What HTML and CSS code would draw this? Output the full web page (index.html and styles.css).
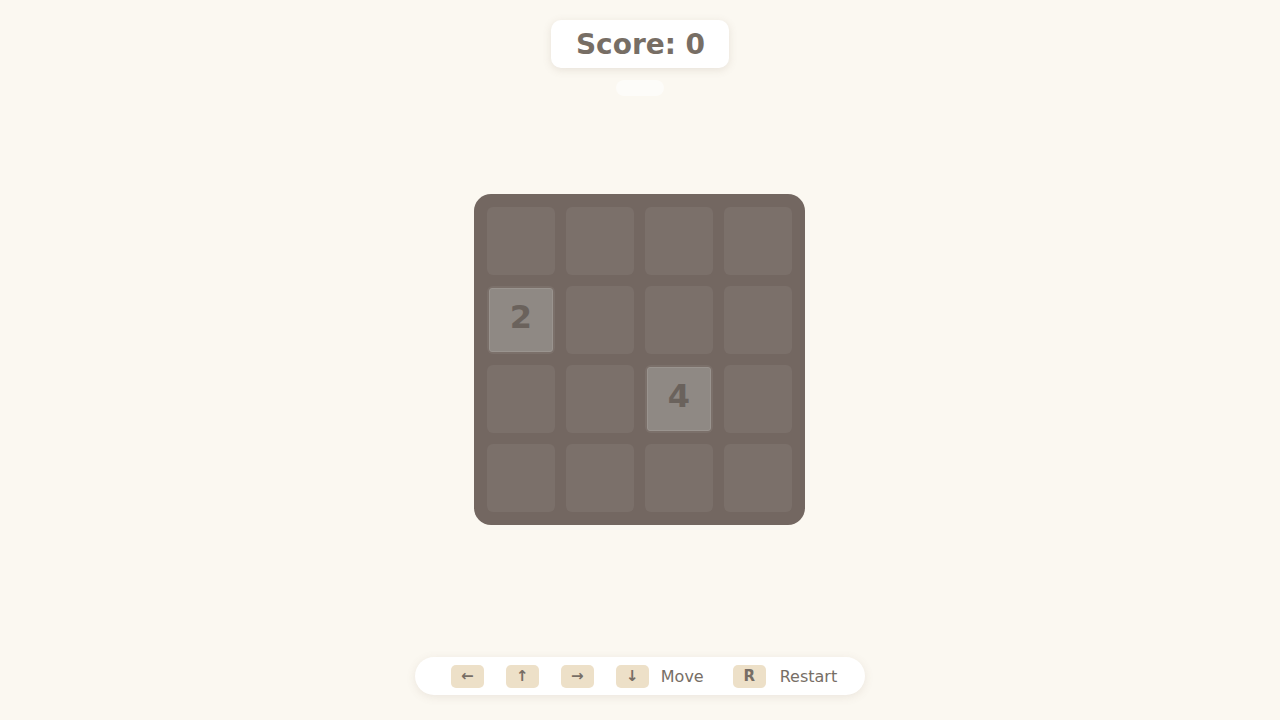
FILE: index.html
```html
<!DOCTYPE html>
<html>
<head>
<meta charset="utf-8">
<link rel="stylesheet" href="styles.css">
</head>
<body>
<div class="page">
  <header class="top">
    <div class="score">Score: 0</div>
    <div class="pill"></div>
  </header>
  <main class="board">
    <div class="cell"></div><div class="cell"></div><div class="cell"></div><div class="cell"></div>
    <div class="cell"><div class="tile">2</div></div><div class="cell"></div><div class="cell"></div><div class="cell"></div>
    <div class="cell"></div><div class="cell"></div><div class="cell"><div class="tile">4</div></div><div class="cell"></div>
    <div class="cell"></div><div class="cell"></div><div class="cell"></div><div class="cell"></div>
  </main>
  <footer class="bottom">
    <div class="help">
      <span class="key">←</span>
      <span class="key">↑</span>
      <span class="key">→</span>
      <span class="key key-last">↓</span>
      <span class="label label-move">Move</span>
      <span class="key key-r">R</span>
      <span class="label">Restart</span>
    </div>
  </footer>
</div>
</body>
</html>
```

FILE: styles.css
```css
html, body {
  margin: 0;
  padding: 0;
}
body {
  background: #fbf8f1;
  font-family: "DejaVu Sans", "Liberation Sans", sans-serif;
  color: #776e65;
}
.page {
  height: 719px;
  display: grid;
  grid-template-rows: 1fr auto 1fr;
  justify-items: center;
}
.top {
  display: flex;
  flex-direction: column;
  align-items: center;
  padding-top: 20px;
}
.score {
  background: #ffffff;
  border-radius: 10px;
  box-shadow: 0 2px 8px rgba(120, 100, 80, 0.15);
  font-weight: bold;
  font-size: 28px;
  line-height: 50px;
  height: 48px;
  padding: 0 24px 0 25px;
  color: #776e65;
}
.pill {
  margin-top: 12px;
  width: 48px;
  height: 16px;
  border-radius: 8px;
  background: rgba(255, 255, 255, 0.55);
}
.board {
  width: 305px;
  padding: 13px;
  background: #736761;
  border-radius: 17px;
  display: grid;
  grid-template-columns: repeat(4, 68px);
  grid-auto-rows: 68px;
  gap: 11px;
  margin-right: 1px;
}
.cell {
  background: #7b706a;
  border-radius: 6px;
  display: flex;
  align-items: center;
  justify-content: center;
}
.tile {
  background: #8f8984;
  border: 1px solid #9a948f;
  border-radius: 3px;
  display: flex;
  align-items: center;
  justify-content: center;
  font-weight: bold;
  font-size: 32px;
  line-height: 1;
  padding-bottom: 6px;
  box-sizing: border-box;
  height: 64px;
  width: 64px;
  color: #6a625c;
}
.bottom {
  display: flex;
  align-items: flex-end;
  padding-bottom: 24px;
}
.help {
  height: 38px;
  display: flex;
  align-items: center;
  background: #ffffff;
  border-radius: 19px;
  box-shadow: 0 2px 10px rgba(120, 100, 80, 0.12);
  padding: 0 28px 0 36px;
  font-size: 16px;
}
.key {
  width: 33px;
  height: 23px;
  background: #ede0c8;
  border-radius: 5px;
  display: flex;
  align-items: center;
  justify-content: center;
  font-size: 15px;
  font-weight: bold;
  color: #776e65;
  margin-right: 22px;
}
.key-last {
  margin-right: 12px;
}
.key-r {
  margin-right: 14px;
}
.label {
  color: #776e65;
}
.label-move {
  margin-right: 29px;
}
```
